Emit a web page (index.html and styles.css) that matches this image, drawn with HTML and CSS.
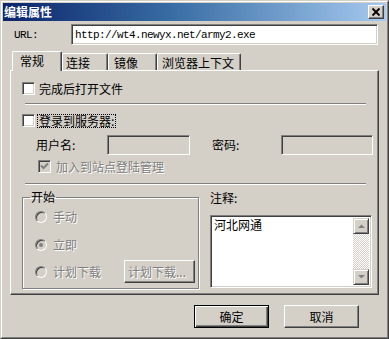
FILE: index.html
```html
<!DOCTYPE html>
<html>
<head>
<meta charset="utf-8">
<link rel="stylesheet" href="styles.css">
</head>
<body>
<div class="window">
  <div class="frame">
    <div class="titlebar">
      <span class="title">编辑属性</span>
      <span class="close"><svg width="14" height="12" viewBox="0 0 14 12"><path d="M3.5 2.5 L10.5 9.5 M10.5 2.5 L3.5 9.5" stroke="#000" stroke-width="1.8" fill="none"/></svg></span>
    </div>
    <div class="url-row">
      <span class="url-label">URL:</span>
      <div class="field url-field">http://wt4.newyx.net/army2.exe</div>
    </div>
    <div class="tabs">
      <div class="tab-strip">
        <div class="tab active t1">常规</div>
        <div class="tab t2">连接</div>
        <div class="tab t3">镜像</div>
        <div class="tab t4">浏览器上下文</div>
      </div>
      <div class="panel">
        <div class="check-row r1"><span class="chk"></span><span class="lbl">完成后打开文件</span></div>
        <div class="sep s1"></div>
        <div class="check-row r2"><span class="chk"></span><span class="lbl focus">登录到服务器:</span></div>
        <div class="cred-row">
          <span class="cred-label user-label">用户名:</span><span class="field cred-field user-field"></span>
          <span class="cred-label pass-label">密码:</span><span class="field cred-field pass-field"></span>
        </div>
        <div class="check-row r3 disabled"><span class="chk chk-disabled"><svg width="9" height="9" viewBox="0 0 9 9"><path d="M1 3.5 L3.5 6 L8 1.5" stroke="#808080" stroke-width="2" fill="none"/></svg></span><span class="lbl">加入到站点登陆管理</span></div>
        <div class="sep s2"></div>
        <div class="lower">
          <fieldset class="group">
            <legend class="legend">开始</legend>
            <div class="radio-row first"><span class="radio"></span><span class="dis-text">手动</span></div>
            <div class="radio-row second"><span class="radio on"></span><span class="dis-text">立即</span></div>
            <div class="radio-row third"><span class="radio"></span><span class="dis-text">计划下载</span><span class="btn sched dis-text">计划下载...</span></div>
          </fieldset>
          <div class="notes">
            <div class="notes-label">注释:</div>
            <div class="field notes-field">
              <div class="notes-text">河北网通</div>
              <div class="scrollbar">
                <span class="sb-btn"><svg width="9" height="6" viewBox="0 0 9 6"><path d="M1 5 L4.5 1.5 L8 5 Z" fill="#808080"/></svg></span>
                <span class="sb-track"></span>
                <span class="sb-btn"><svg width="9" height="6" viewBox="0 0 9 6"><path d="M1 1 L4.5 4.5 L8 1 Z" fill="#808080"/></svg></span>
              </div>
            </div>
          </div>
        </div>
      </div>
    </div>
    <div class="actions">
      <span class="btn default">确定</span>
      <span class="btn">取消</span>
    </div>
  </div>
</div>
</body>
</html>
```
FILE: styles.css
```css
* { box-sizing: border-box; }
html, body { margin: 0; padding: 0; background: #d4d0c8; }
body {
  font-family: "Noto Sans CJK SC", "Noto Sans", sans-serif;
  font-size: 12px;
  line-height: 12px;
  color: #000;
}
.window {
  width: 389px;
  height: 339px;
  background: #d4d0c8;
  border: 1px solid;
  border-color: #d4d0c8 #404040 #404040 #d4d0c8;
}
.frame {
  height: 100%;
  border: 1px solid;
  border-color: #fff #808080 #808080 #fff;
  padding: 1px;
  display: flex;
  flex-direction: column;
}
.titlebar {
  height: 18px;
  flex: none;
  background: linear-gradient(90deg, #0a246a 0%, #3a6ea5 45%, #a6caf0 100%);
  display: flex;
  align-items: center;
  justify-content: space-between;
  padding: 0 2px 0 1px;
}
.title {
  color: #fff;
  font-weight: bold;
  font-size: 12px;
  line-height: 12px;
}
.close {
  width: 16px;
  height: 14px;
  background: #d4d0c8;
  border: 1px solid;
  border-color: #fff #404040 #404040 #fff;
  box-shadow: inset -1px -1px 0 #808080;
  display: flex;
  align-items: center;
  justify-content: center;
}
.field {
  border: 1px solid;
  border-color: #808080 #fff #fff #808080;
  box-shadow: inset 1px 1px 0 #404040, inset -1px -1px 0 #d4d0c8;
  background: #fff;
}
.url-row {
  display: flex;
  align-items: center;
  height: 21px;
  margin: 3px 8px 0 11px;
  flex: none;
}
.url-label {
  width: 57px;
  font-family: "Liberation Mono", monospace;
  font-size: 11px;
  letter-spacing: -0.6px;
}
.url-field {
  flex: 1;
  height: 21px;
  padding: 4px 0 0 3px;
  font-family: "Liberation Mono", monospace;
  font-size: 11px;
  line-height: 12px;
  letter-spacing: -0.6px;
}
.tabs {
  margin: 6px 7px 0 7px;
  flex: none;
}
.tab-strip {
  display: flex;
  align-items: flex-end;
  height: 19px;
  padding-left: 2px;
}
.tab {
  height: 17px;
  border-top: 1px solid #fff;
  border-left: 1px solid #fff;
  border-right: 1px solid #404040;
  box-shadow: inset -1px 0 0 #808080;
  border-radius: 2px 2px 0 0;
  padding-top: 3px;
  background: #d4d0c8;
}
.tab.active {
  height: 20px;
  margin-bottom: -1px;
  position: relative;
  z-index: 1;
}
.t1 { width: 50px; padding-left: 7px; }
.t2 { width: 46px; padding-left: 3px; }
.t3 { width: 49px; padding-left: 5px; }
.t4 { width: 84px; padding-left: 4px; }
.panel {
  height: 225px;
  border: 1px solid;
  border-color: #fff #404040 #404040 #fff;
  box-shadow: inset -1px -1px 0 #808080;
  padding: 11px 0 0 11px;
}
.check-row {
  display: flex;
  align-items: center;
  height: 13px;
  gap: 4px;
}
.chk {
  width: 13px;
  height: 13px;
  flex: none;
  background: #fff;
  border: 1px solid;
  border-color: #808080 #fff #fff #808080;
  box-shadow: inset 1px 1px 0 #404040, inset -1px -1px 0 #d4d0c8;
  display: flex;
  align-items: center;
  justify-content: center;
}
.chk-disabled { background: #d4d0c8; }
.focus {
  border: 1px dotted #000;
  padding: 0 1px;
  line-height: 12px;
  margin-left: -2px;
}
.r2 .focus { margin-left: -2px; }
.r2 { margin-top: 9px; }
.sep {
  height: 2px;
  width: 341px;
  margin-left: 3px;
  border-top: 1px solid #808080;
  border-bottom: 1px solid #fff;
}
.s1 { margin-top: 8px; }
.s2 { margin-top: 10px; }
.cred-row {
  display: flex;
  align-items: center;
  height: 20px;
  margin-top: 8px;
  margin-left: 14px;
}
.cred-label { flex: none; }
.user-label { width: 71px; }
.pass-label { width: 69px; margin-left: 22px; }
.cred-field {
  height: 20px;
  background: #d4d0c8;
  display: block;
}
.user-field { width: 83px; }
.pass-field { width: 92px; }
.r3 { margin-top: 5px; margin-left: 16px; gap: 5px; }
.disabled .lbl, .dis-text {
  color: #808080;
  text-shadow: 1px 1px 0 #fff;
}
.lower {
  display: flex;
  margin-top: 6px;
}
.group {
  width: 177px;
  height: 98px;
  margin: 0;
  padding: 0 3px 0 12px;
  border: 1px solid #808080;
  box-shadow: inset 1px 1px 0 #fff, 1px 1px 0 #fff;
  min-width: 0;
}
.legend {
  margin-left: -5px;
  padding: 0 1px;
  line-height: 12px;
}
.radio-row {
  display: flex;
  align-items: center;
  gap: 6px;
  height: 12px;
}
.radio-row.first { margin-top: 8px; }
.radio-row.second { margin-top: 16px; }
.radio-row.third { margin-top: 9px; height: 23px; }
.radio {
  width: 12px;
  height: 12px;
  flex: none;
  border-radius: 50%;
  border: 1px solid;
  border-color: #808080 #fff #fff #808080;
  box-shadow: inset 1px 1px 0 #404040;
  background: #d4d0c8;
  display: flex;
  align-items: center;
  justify-content: center;
}
.radio.on::after {
  content: "";
  width: 4px;
  height: 4px;
  border-radius: 50%;
  background: #808080;
}
.btn {
  display: flex;
  align-items: center;
  justify-content: center;
  background: #d4d0c8;
  border: 1px solid;
  border-color: #fff #404040 #404040 #fff;
  box-shadow: inset -1px -1px 0 #808080;
}
.sched {
  margin-left: auto;
  width: 71px;
  height: 23px;
  justify-content: flex-start;
  padding-left: 3px;
}
.notes {
  margin-left: 11px;
  width: 162px;
}
.notes-label { margin-top: 1px; }
.notes-field {
  margin-top: 11px;
  height: 73px;
  display: flex;
  padding: 2px;
}
.notes-text { flex: 1; padding: 1px 0 0 1px; }
.scrollbar {
  width: 16px;
  display: flex;
  flex-direction: column;
}
.sb-btn {
  width: 16px;
  height: 16px;
  flex: none;
  background: #d4d0c8;
  border: 1px solid;
  border-color: #d4d0c8 #404040 #404040 #d4d0c8;
  box-shadow: inset 1px 1px 0 #fff, inset -1px -1px 0 #808080;
  display: flex;
  align-items: center;
  justify-content: center;
}
.sb-track {
  flex: 1;
  background: repeating-conic-gradient(#fff 0 25%, #d4d0c8 0 50%) 0 0 / 2px 2px;
}
.actions {
  display: flex;
  justify-content: flex-end;
  gap: 15px;
  margin-top: 10px;
  padding-right: 27px;
}
.actions .btn {
  width: 75px;
  height: 23px;
}
.actions .btn.default {
  border: 1px solid #000;
  box-shadow: inset 1px 1px 0 #fff, inset -1px -1px 0 #404040, inset -2px -2px 0 #808080;
}
```
